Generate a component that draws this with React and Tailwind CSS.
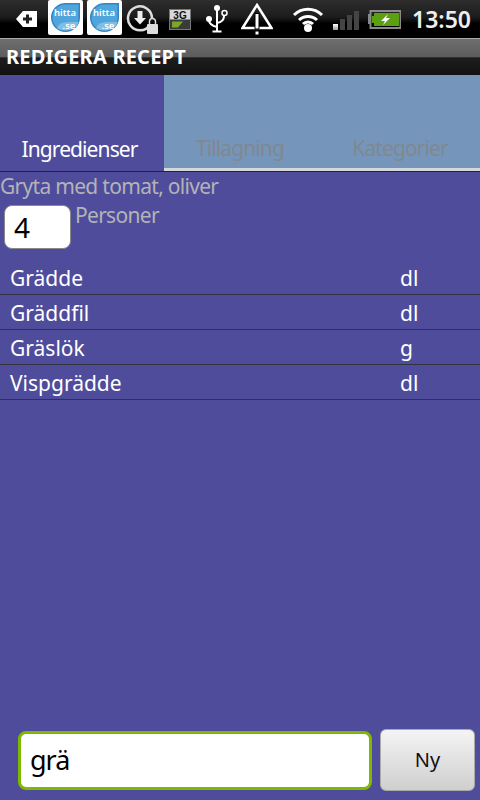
const font = { fontFamily: '"Noto Sans", "Open Sans", sans-serif' }

const HittaIcon = () => (
  <div className="flex h-[35px] w-[35px] items-center justify-center self-start rounded-[2px] bg-white">
    <svg width="29" height="29" viewBox="0 0 29 29">
      <path d="M29 0V14.500A14.500 14.500 0 1 1 14.500 0Z" fill="#2f86c6" />
      <path d="M27.500 1.500V14.500A13 13 0 0 1 1.500 14.500A13 13 0 0 1 14.500 1.500Z" fill="#4fa5dc" />
      <path d="M6 25Q8 19 17 19H27.500Q26 27 15 27.500Q9 27.500 6 25Z" fill="#82bde2" />
      <text x="14" y="13" textAnchor="middle" fontSize="9.500" fontWeight="600" fill="#fff" fontFamily="Noto Sans">hitta</text>
      <text x="18" y="25.500" textAnchor="middle" fontSize="9.500" fontWeight="600" fill="#fff" fontFamily="Noto Sans">.se</text>
    </svg>
  </div>
)

const StatusBar = () => (
  <div className="flex h-[38px] items-center bg-[linear-gradient(#2e2e2e,#1c1c1c_45%,#000_62%,#000)]">
    <svg className="ml-[16px]" width="21" height="18" viewBox="0 0 21 18">
      <path d="M0 9L7 1H21V17H7Z" fill="#fff" />
      <path d="M10 7.500H7V10.500H10V13.500H13V10.500H16V7.500H13V4.500H10Z" fill="#222" />
    </svg>
    <div className="ml-[11px] flex gap-[4px] self-start">
      <HittaIcon />
      <HittaIcon />
    </div>
    <svg className="ml-[4px]" width="32" height="32" viewBox="0 0 32 32">
      <path d="M24 22A12 12 0 1 1 26 15" fill="none" stroke="#ddd" strokeWidth="2.500" />
      <path d="M11.500 8H16.500V15H20L14 21.500L8 15H11.500Z" fill="#eee" />
      <rect x="21" y="21" width="11" height="10" rx="1" fill="#ddd" />
      <path d="M23.500 21V18.500A3 3 0 0 1 29.500 18.500V21" fill="none" stroke="#ddd" strokeWidth="1.500" />
    </svg>
    <svg className="ml-[11px]" width="22" height="21" viewBox="0 0 22 21">
      <rect x="0.500" y="0.500" width="21" height="20" fill="#3a3a3a" stroke="#777" />
      <rect x="1" y="1" width="20" height="9.500" fill="#d8d8d8" />
      <text x="11" y="9.500" textAnchor="middle" fontSize="10" fontWeight="700" fill="#111" fontFamily="Liberation Sans">3G</text>
      <path d="M3 18.500V12.500H14L9 18.500Z" fill="#7aa82a" />
    </svg>
    <svg className="ml-[14px]" width="23" height="28" viewBox="0 0 23 28">
      <path d="M12 3V26M7.500 26.500H16.500M12 22Q4 20 4 15M12 18Q19 17 19 11" fill="none" stroke="#fff" strokeWidth="2" />
      <circle cx="12" cy="3" r="3" fill="#fff" />
      <circle cx="4" cy="14" r="3" fill="#fff" />
      <circle cx="19.500" cy="8" r="2.500" fill="none" stroke="#fff" strokeWidth="1.500" />
    </svg>
    <svg className="ml-[13px]" width="32" height="32" viewBox="0 0 32 32">
      <path d="M16 2L30.500 25H1.500Z" fill="none" stroke="#fff" strokeWidth="2.500" />
      <path d="M14 10.500H18V26H14ZM14 28H18V32H14Z" fill="#fff" stroke="#000" strokeWidth="1" />
    </svg>
    <svg className="ml-[19px]" width="32" height="26" viewBox="0 0 32 26">
      <path d="M2 9A20 20 0 0 1 30 9M7 14A13 13 0 0 1 25 14M11 18A7 7 0 0 1 21 18" fill="none" stroke="#fff" strokeWidth="3" />
      <circle cx="16" cy="22" r="4" fill="#fff" />
    </svg>
    <div className="ml-[9px] flex items-end gap-[2px] pt-[3px]">
      <div className="h-[6px] w-[5px] bg-[linear-gradient(#fff,#999)]" />
      <div className="h-[11px] w-[5px] bg-[#444]" />
      <div className="h-[15px] w-[5px] bg-[#444]" />
      <div className="h-[19px] w-[5px] bg-[#444]" />
    </div>
    <svg className="ml-[8px]" width="34" height="19" viewBox="0 0 34 19">
      <path d="M3 4H1V14H3Z" fill="#888" />
      <rect x="3.500" y="1" width="30" height="17" fill="none" stroke="#8a8a8a" strokeWidth="2" />
      <path d="M5 6H7V3H32V16H7V13H5Z" fill="#5aa010" />
      <path d="M21 4L14 11H18L16 15L23 8H19Z" fill="#fff" />
    </svg>
    <span className="ml-[11px] text-[23px] leading-none font-semibold text-[#eee]" style={font}>13:50</span>
  </div>
)

const TitleBar = () => (
  <div className="flex h-[37px] items-center border-t border-[#aaa] bg-[linear-gradient(#6f6f6f,#5c5c5c_50%,#1d1d1d_52%,#111)] pl-[6px]">
    <span className="text-[20px] leading-none font-bold tracking-[0.2px] text-white" style={font}>REDIGERA RECEPT</span>
  </div>
)

const Tab = ({ label, className }) => (
  <div className={`flex items-end justify-center pb-[6px] ${className}`}>
    <span className="text-[21px] leading-[27px] tracking-[-0.9px] text-[#808890]" style={font}>{label}</span>
  </div>
)

const Tabs = () => (
  <div className="flex h-[97px] border-b border-[#20204a]">
    <div className="flex w-[164px] items-end justify-center pr-[5px] pb-[8px]">
      <span className="text-[21px] leading-[27px] tracking-[-0.9px] text-white" style={font}>Ingredienser</span>
    </div>
    <div className="flex flex-1 border-b-[3px] border-b-[#d5d8da] bg-[#7596ba]">
      <Tab label="Tillagning" className="w-[152px]" />
      <Tab label="Kategorier" className="w-[164px] pl-[4px]" />
    </div>
  </div>
)

const rows = [
  ['Grädde', 'dl'],
  ['Gräddfil', 'dl'],
  ['Gräslök', 'g'],
  ['Vispgrädde', 'dl'],
]

export default function App() {
  return (
    <div className="flex h-[800px] w-[480px] flex-col overflow-hidden bg-[#4f4d9b]" style={font}>
      <StatusBar />
      <TitleBar />
      <Tabs />
      <div className="mt-[1px] text-[21px] leading-[27px] tracking-[-0.7px] text-[#b3b3b8]">Gryta med tomat, oliver</div>
      <div className="mt-[5px] flex items-start pl-[4px]">
        <div className="flex h-[44px] w-[67px] items-center rounded-[8px] border border-[#8a8a8a] bg-white pl-[9px] text-[28px] text-black">4</div>
        <span className="ml-[4px] text-[21px] leading-[20px] tracking-[-0.7px] text-[#b3b3b8]">Personer</span>
      </div>
      <div className="mt-[11px]">
        {rows.map(([name, unit]) => (
          <div key={name} className="flex h-[35px] items-center border-b border-[#33333f] pt-[4px] pl-[10px] text-[21px] text-white">
            <span className="w-[390px]">{name}</span>
            <span>{unit}</span>
          </div>
        ))}
      </div>
      <div className="mt-auto mb-[9px] flex items-center pl-[18px]">
        <div className="flex h-[59px] w-[354px] items-center rounded-[8px] border-[3px] border-[#7fb800] bg-white pl-[9px] text-[27px] tracking-[-1px] text-black">grä</div>
        <div className="ml-[8px] flex h-[62px] w-[95px] items-center justify-center rounded-[6px] border border-[#aaa] bg-[linear-gradient(#f4f4f4,#cfcfcf)] text-[20px] text-[#111]">Ny</div>
      </div>
    </div>
  )
}
